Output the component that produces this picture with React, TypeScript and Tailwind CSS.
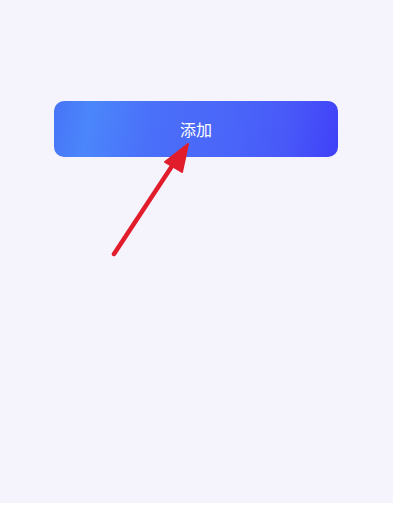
const Arrow = () => (
	<svg className="pointer-events-none absolute left-0 top-0" width="395" height="513" viewBox="0 0 395 513">
		<line x1="114" y1="254" x2="176" y2="160" stroke="#e11d2b" strokeWidth="4.5" strokeLinecap="round" />
		<polygon points="188,144 165,162 182,172" fill="#e11d2b" stroke="#e11d2b" strokeWidth="2" strokeLinejoin="round" />
	</svg>
);

export default function App() {
	return (
		<div className="relative h-[513px] w-[395px] overflow-hidden bg-white font-['Noto_Sans_CJK_SC','Noto_Sans',sans-serif]">
			<div className="flex h-[503px] w-[393px] flex-col bg-[#f5f4fd] pt-[101px]">
				<div className="ml-[54px] w-[284px]">
					<button className="flex h-14 w-full items-center justify-center rounded-[10px] bg-[linear-gradient(100deg,#4774f7_0%,#4b86fb_13%,#4a6ff9_35%,#4a66f9_60%,#4858f8_82%,#4040f8_100%)] text-[16px] text-white">
						添加
					</button>
				</div>
			</div>
			<Arrow />
		</div>
	);
}
